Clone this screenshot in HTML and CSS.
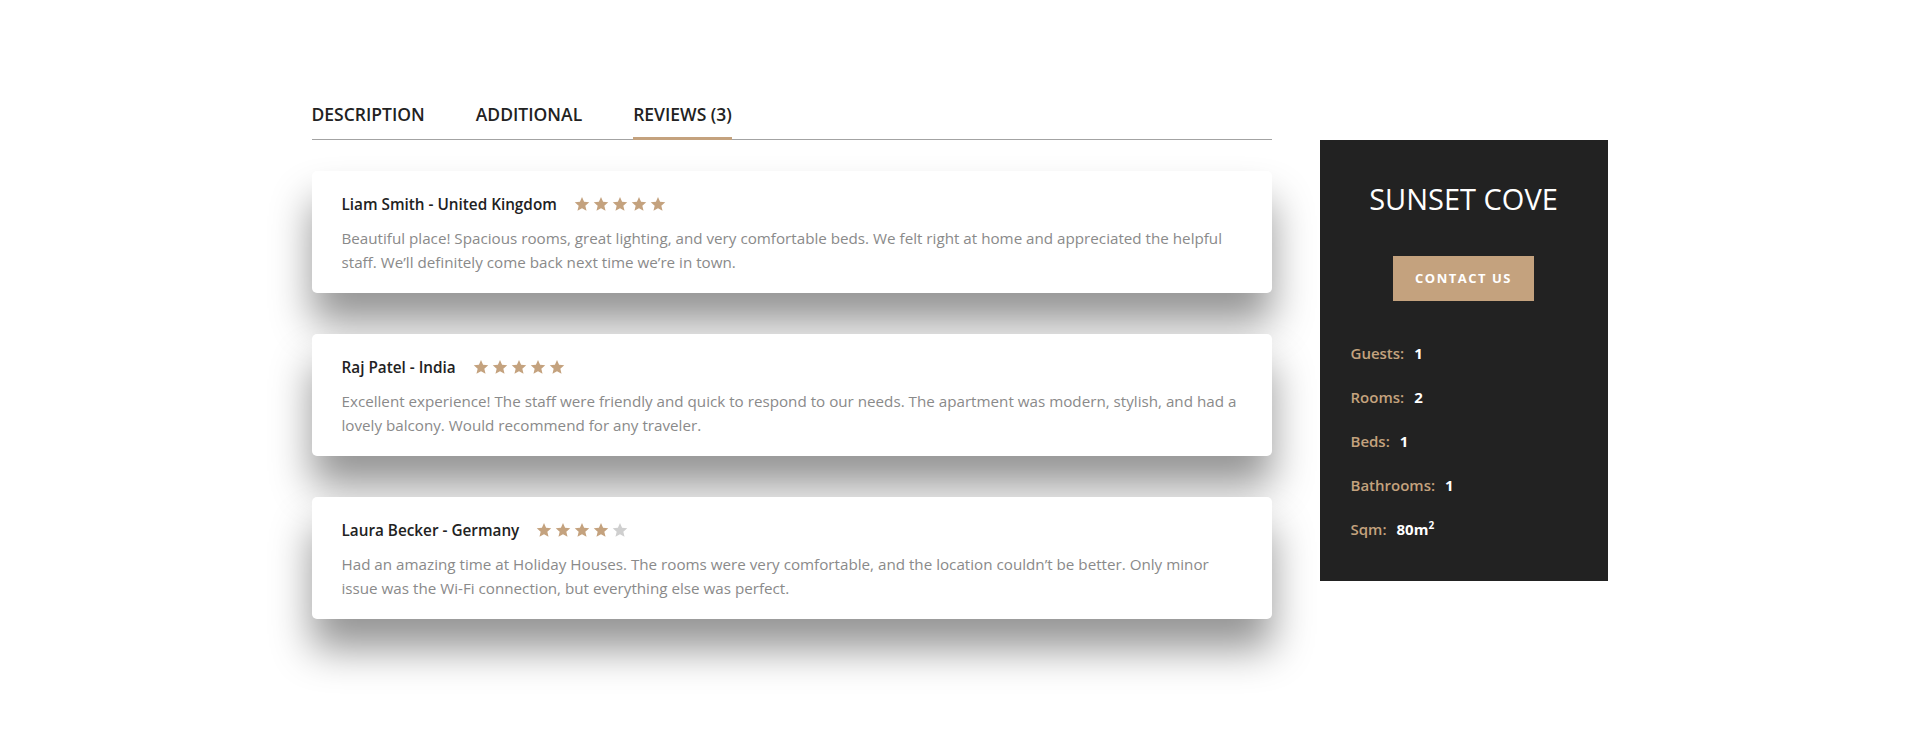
FILE: index.html
```html
<!DOCTYPE html>
<html lang="en">
<head>
<meta charset="utf-8">
<title>Sunset Cove - Reviews</title>
<link rel="stylesheet" href="styles.css">
</head>
<body>
<main class="page">
  <nav class="tabs">
    <a class="tab">Description</a>
    <a class="tab">Additional</a>
    <a class="tab active">Reviews (3)</a>
  </nav>

  <section class="reviews">
    <article class="review">
      <header class="review-head">
        <h4 class="review-name">Liam Smith - United Kingdom</h4>
        <div class="stars">
          <svg class="star" viewBox="0 0 24 24"><path d="M12 1.5l3.1 7.2 7.8.7-5.9 5.2 1.8 7.7L12 18.2l-6.8 4.1 1.8-7.7-5.9-5.2 7.8-.7z"/></svg>
          <svg class="star" viewBox="0 0 24 24"><path d="M12 1.5l3.1 7.2 7.8.7-5.9 5.2 1.8 7.7L12 18.2l-6.8 4.1 1.8-7.7-5.9-5.2 7.8-.7z"/></svg>
          <svg class="star" viewBox="0 0 24 24"><path d="M12 1.5l3.1 7.2 7.8.7-5.9 5.2 1.8 7.7L12 18.2l-6.8 4.1 1.8-7.7-5.9-5.2 7.8-.7z"/></svg>
          <svg class="star" viewBox="0 0 24 24"><path d="M12 1.5l3.1 7.2 7.8.7-5.9 5.2 1.8 7.7L12 18.2l-6.8 4.1 1.8-7.7-5.9-5.2 7.8-.7z"/></svg>
          <svg class="star" viewBox="0 0 24 24"><path d="M12 1.5l3.1 7.2 7.8.7-5.9 5.2 1.8 7.7L12 18.2l-6.8 4.1 1.8-7.7-5.9-5.2 7.8-.7z"/></svg>
        </div>
      </header>
      <p class="review-text">Beautiful place! Spacious rooms, great lighting, and very comfortable beds. We felt right at home and appreciated the helpful staff. We’ll definitely come back next time we’re in town.</p>
    </article>

    <article class="review">
      <header class="review-head">
        <h4 class="review-name">Raj Patel - India</h4>
        <div class="stars">
          <svg class="star" viewBox="0 0 24 24"><path d="M12 1.5l3.1 7.2 7.8.7-5.9 5.2 1.8 7.7L12 18.2l-6.8 4.1 1.8-7.7-5.9-5.2 7.8-.7z"/></svg>
          <svg class="star" viewBox="0 0 24 24"><path d="M12 1.5l3.1 7.2 7.8.7-5.9 5.2 1.8 7.7L12 18.2l-6.8 4.1 1.8-7.7-5.9-5.2 7.8-.7z"/></svg>
          <svg class="star" viewBox="0 0 24 24"><path d="M12 1.5l3.1 7.2 7.8.7-5.9 5.2 1.8 7.7L12 18.2l-6.8 4.1 1.8-7.7-5.9-5.2 7.8-.7z"/></svg>
          <svg class="star" viewBox="0 0 24 24"><path d="M12 1.5l3.1 7.2 7.8.7-5.9 5.2 1.8 7.7L12 18.2l-6.8 4.1 1.8-7.7-5.9-5.2 7.8-.7z"/></svg>
          <svg class="star" viewBox="0 0 24 24"><path d="M12 1.5l3.1 7.2 7.8.7-5.9 5.2 1.8 7.7L12 18.2l-6.8 4.1 1.8-7.7-5.9-5.2 7.8-.7z"/></svg>
        </div>
      </header>
      <p class="review-text">Excellent experience! The staff were friendly and quick to respond to our needs. The apartment was modern, stylish, and had a lovely balcony. Would recommend for any traveler.</p>
    </article>

    <article class="review">
      <header class="review-head">
        <h4 class="review-name">Laura Becker - Germany</h4>
        <div class="stars">
          <svg class="star" viewBox="0 0 24 24"><path d="M12 1.5l3.1 7.2 7.8.7-5.9 5.2 1.8 7.7L12 18.2l-6.8 4.1 1.8-7.7-5.9-5.2 7.8-.7z"/></svg>
          <svg class="star" viewBox="0 0 24 24"><path d="M12 1.5l3.1 7.2 7.8.7-5.9 5.2 1.8 7.7L12 18.2l-6.8 4.1 1.8-7.7-5.9-5.2 7.8-.7z"/></svg>
          <svg class="star" viewBox="0 0 24 24"><path d="M12 1.5l3.1 7.2 7.8.7-5.9 5.2 1.8 7.7L12 18.2l-6.8 4.1 1.8-7.7-5.9-5.2 7.8-.7z"/></svg>
          <svg class="star" viewBox="0 0 24 24"><path d="M12 1.5l3.1 7.2 7.8.7-5.9 5.2 1.8 7.7L12 18.2l-6.8 4.1 1.8-7.7-5.9-5.2 7.8-.7z"/></svg>
          <svg class="star empty" viewBox="0 0 24 24"><path d="M12 1.5l3.1 7.2 7.8.7-5.9 5.2 1.8 7.7L12 18.2l-6.8 4.1 1.8-7.7-5.9-5.2 7.8-.7z"/></svg>
        </div>
      </header>
      <p class="review-text">Had an amazing time at Holiday Houses. The rooms were very comfortable, and the location couldn’t be better. Only minor issue was the Wi-Fi connection, but everything else was perfect.</p>
    </article>
  </section>

  <aside class="sidebar">
    <h2 class="sidebar-title">SUNSET COVE</h2>
    <div class="sidebar-action">
      <a class="btn-contact">Contact us</a>
    </div>
    <ul class="facts">
      <li class="fact"><span class="fact-label">Guests:</span><span class="fact-value">1</span></li>
      <li class="fact"><span class="fact-label">Rooms:</span><span class="fact-value">2</span></li>
      <li class="fact"><span class="fact-label">Beds:</span><span class="fact-value">1</span></li>
      <li class="fact"><span class="fact-label">Bathrooms:</span><span class="fact-value">1</span></li>
      <li class="fact"><span class="fact-label">Sqm:</span><span class="fact-value">80m<sup>2</sup></span></li>
    </ul>
  </aside>
</main>
</body>
</html>
```

FILE: styles.css
```css
* {
  box-sizing: border-box;
}

html,
body {
  background: #ffffff;
}

body {
  margin: 0;
  font-family: "Open Sans", "Noto Sans", sans-serif;
  color: #222222;
}

.page {
  width: 1296px;
  min-height: 100vh;
  margin: 0 auto;
  padding: 102px 0 120px;
  display: grid;
  grid-template-columns: 960px 288px;
  grid-template-rows: auto 1fr;
  column-gap: 48px;
  align-items: start;
}

/* Tabs */
.tabs {
  grid-column: 1;
  grid-row: 1;
  display: flex;
  gap: 51px;
  border-bottom: 1px solid #a3a3a3;
}

.tab {
  font-size: 17.5px;
  line-height: 24px;
  font-weight: 600;
  text-transform: uppercase;
  color: #222222;
  padding-bottom: 11px;
  border-bottom: 3px solid transparent;
  margin-bottom: -1px;
  cursor: pointer;
}

.tab.active {
  border-bottom-color: #c4a27e;
}

/* Reviews */
.reviews {
  grid-column: 1;
  grid-row: 2;
  padding-top: 31px;
  display: flex;
  flex-direction: column;
  gap: 41px;
}

.review {
  background: #ffffff;
  border-radius: 5px;
  padding: 22px 30px 19px;
  box-shadow: 0 30px 40px rgba(0, 0, 0, 0.42);
}

.review-head {
  display: flex;
  align-items: center;
  gap: 17px;
}

.review-name {
  margin: 0;
  font-size: 15.3px;
  line-height: 22px;
  font-weight: 600;
  color: #222222;
}

.stars {
  display: flex;
  gap: 3px;
}

.star {
  width: 16px;
  height: 16px;
  fill: #c4a27e;
}

.star.empty {
  fill: #cfcfcf;
}

.review-text {
  margin: 11px 0 0;
  font-size: 15.2px;
  line-height: 24px;
  color: #8a8a8a;
}

/* Sidebar */
.sidebar {
  grid-column: 2;
  grid-row: 2;
  background: #222222;
  padding: 42px 31px 40px;
}

.sidebar-title {
  margin: 0;
  font-size: 29px;
  line-height: 34px;
  font-weight: 500;
  color: #ffffff;
  text-align: center;
}

.sidebar-action {
  margin-top: 40px;
  display: flex;
  justify-content: center;
}

.btn-contact {
  display: inline-block;
  background: #c4a27e;
  color: #ffffff;
  font-size: 13px;
  font-weight: 700;
  letter-spacing: 1.5px;
  text-transform: uppercase;
  line-height: 45px;
  padding: 0 22px;
  cursor: pointer;
}

.facts {
  list-style: none;
  margin: 40px 0 0;
  padding: 0;
  display: flex;
  flex-direction: column;
  gap: 20px;
}

.fact {
  font-size: 15px;
  line-height: 24px;
}

.fact-label {
  color: #c4a27e;
  font-weight: 600;
}

.fact-value {
  color: #ffffff;
  font-weight: 700;
  margin-left: 10px;
}

.fact-value sup {
  font-size: 10px;
  line-height: 0;
}
```
